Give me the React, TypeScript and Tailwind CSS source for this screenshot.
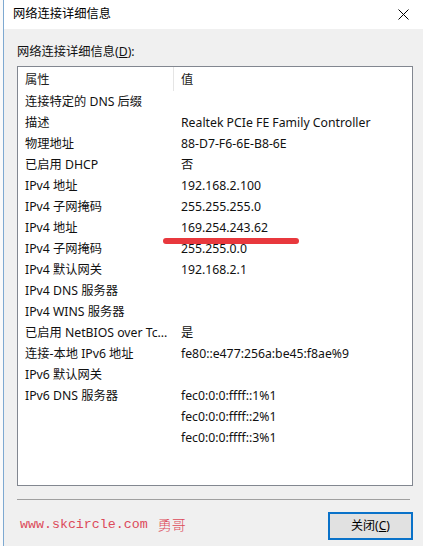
const rows: [string, string][] = [
  ["连接特定的 DNS 后缀", ""],
  ["描述", "Realtek PCIe FE Family Controller"],
  ["物理地址", "88-D7-F6-6E-B8-6E"],
  ["已启用 DHCP", "否"],
  ["IPv4 地址", "192.168.2.100"],
  ["IPv4 子网掩码", "255.255.255.0"],
  ["IPv4 地址", "169.254.243.62"],
  ["IPv4 子网掩码", "255.255.0.0"],
  ["IPv4 默认网关", "192.168.2.1"],
  ["IPv4 DNS 服务器", ""],
  ["IPv4 WINS 服务器", ""],
  ["已启用 NetBIOS over Tc...", "是"],
  ["连接-本地 IPv6 地址", "fe80::e477:256a:be45:f8ae%9"],
  ["IPv6 默认网关", ""],
  ["IPv6 DNS 服务器", "fec0:0:0:ffff::1%1"],
  ["", "fec0:0:0:ffff::2%1"],
  ["", "fec0:0:0:ffff::3%1"],
];

function App() {
  return (
    <div className="flex h-[546px] w-[423px] overflow-hidden bg-[#f0f0f0] font-['Noto_Sans','Noto_Sans_CJK_SC',sans-serif] text-[12.25px] text-[#111]">
      <div className="w-[3px] bg-[#fafafa]" />
      <div className="w-px bg-[#7ea9d1]" />

      <div className="flex flex-1 flex-col">
        {/* title bar */}
        <div className="flex h-[29px] items-center justify-between bg-white pl-[9px] pr-[14px]">
          <span className="text-black">网络连接详细信息</span>
          <svg width="11" height="11" viewBox="0 0 11 11" className="text-black">
            <path d="M0.5 0.5 L10.5 10.5 M10.5 0.5 L0.5 10.5" stroke="currentColor" strokeWidth="1" fill="none" />
          </svg>
        </div>

        <div className="flex flex-1 flex-col pl-[13px] pr-[10px]">
          <div className="mt-[15px] h-[16px] leading-[16px]">
            网络连接详细信息(<span className="underline">D</span>):
          </div>

          {/* list */}
          <div className="relative mt-[6px] h-[420px] border border-[#828790] bg-white">
            <div className="flex h-[24px] items-center">
              <div className="flex h-full w-[156px] items-center border-r border-[#e5e5e5] pl-[7px] pt-[2px] text-[#222]">属性</div>
              <div className="pl-[7px] pt-[2px] text-[#222]">值</div>
            </div>
            {rows.map(([name, value], i) => (
              <div key={i} className="flex h-[21px] items-center whitespace-nowrap pt-[2px]">
                <div className="w-[156px] pl-[7px]">{name}</div>
                <div className="pl-[7px]">{value}</div>
              </div>
            ))}
            <div className="absolute left-[145px] top-[171px] h-[6px] w-[136px] rounded-full bg-[#e8383d]" />
          </div>

          <div className="mr-[3px] mt-[13px] h-px bg-[#a0a0a0]" />

          <div className="mt-[12px] flex items-start justify-between">
            <div className="mt-[2px] flex items-center pl-[3px] text-[#dc4a5a]">
              <span className="font-['Liberation_Mono',monospace] text-[13.3px] font-light">www.skcircle.com</span>
              <span className="ml-[10px] font-['Noto_Sans_CJK_SC',serif] text-[14px] font-light">勇哥</span>
            </div>
            <button className="flex h-[28px] w-[85px] items-center justify-center border-2 border-[#0a72c9] bg-[#e1e1e1] text-[12px] text-black">
              关闭(<span className="underline">C</span>)
            </button>
          </div>
        </div>
      </div>
    </div>
  );
}

export default App;
